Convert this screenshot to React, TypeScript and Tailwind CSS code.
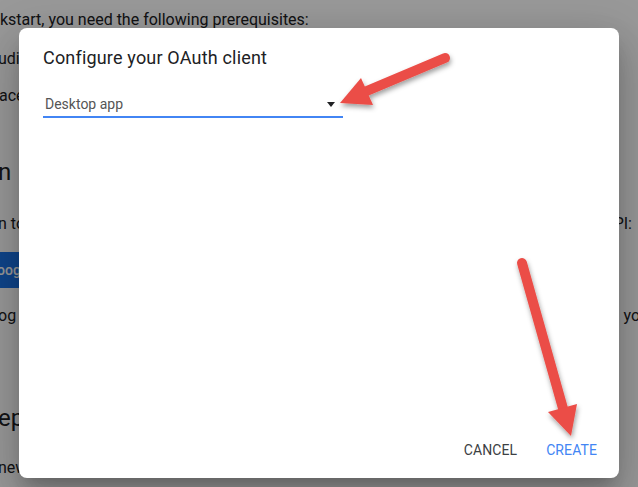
const font = { fontFamily: "Roboto, 'Liberation Sans', sans-serif" };

function Backdrop() {
  return (
    <div className="h-full w-full overflow-hidden bg-white text-[#202124]">
      <p className="mt-[8px] h-[24px] text-[16px] leading-[24px] whitespace-nowrap">kstart, you need the following prerequisites:</p>
      <p className="mt-[15px] h-[24px] -ml-[2px] text-[16px] leading-[24px]">udic</p>
      <p className="mt-[13px] h-[24px] -ml-[1px] text-[16px] leading-[24px]">ace</p>
      <p className="mt-[48px] h-[32px] -ml-[2px] text-[24px] leading-[32px]">n</p>
      <div className="mt-[24px] flex h-[24px] justify-between text-[16px] leading-[24px]">
        <span className="-ml-[2px]">n to</span>
        <span className="pr-[6px]">PI:</span>
      </div>
      <div className="mt-[16px] flex h-[36px] w-[50px] items-center bg-[#1a73e8] text-[14px] font-medium text-white">
        <span className="-ml-[3px]">oog</span>
      </div>
      <div className="mt-[16px] flex h-[24px] justify-between text-[16px] leading-[24px]">
        <span className="-ml-[2px]">og</span>
        <span className="-mr-[2px]">yo</span>
      </div>
      <p className="mt-[74px] h-[32px] -ml-[2px] text-[24px] leading-[32px]">ep</p>
      <p className="mt-[22px] h-[24px] -ml-[2px] text-[16px] leading-[24px]">new</p>
    </div>
  );
}

function Arrows() {
  return (
    <svg className="pointer-events-none absolute inset-0" width="638" height="487" viewBox="0 0 638 487" fill="none">
      <defs>
        <filter id="arrowShadow" x="-30%" y="-30%" width="160%" height="160%">
          <feDropShadow dx="1" dy="3" stdDeviation="2.5" floodColor="#000" floodOpacity="0.38" />
        </filter>
      </defs>
      <g filter="url(#arrowShadow)">
        <line x1="445" y1="58" x2="362" y2="93" stroke="#eb4d47" strokeWidth="10" strokeLinecap="round" />
        <polygon points="340,103 361,78 373,105" fill="#eb4d47" />
      </g>
      <g filter="url(#arrowShadow)">
        <line x1="522" y1="263" x2="564" y2="412" stroke="#eb4d47" strokeWidth="10" strokeLinecap="round" />
        <polygon points="571,436 548,412 577,404" fill="#eb4d47" />
      </g>
    </svg>
  );
}

export default function App() {
  return (
    <div className="relative h-[487px] w-[638px] overflow-hidden" style={font}>
      <Backdrop />
      <div className="absolute inset-0 bg-black/40" />
      <div className="absolute left-[19px] top-[28px] flex h-[450px] w-[600px] flex-col rounded-[8px] bg-white px-[24px] pb-[18px] pt-[18px] shadow-[0_11px_15px_-7px_rgba(0,0,0,0.2),0_24px_38px_3px_rgba(0,0,0,0.14),0_9px_46px_8px_rgba(0,0,0,0.12)]">
        <h2 className="text-[18px] font-normal leading-[24px] tracking-[0.18px] text-[#202124]">Configure your OAuth client</h2>
        <div className="mt-[20px] flex h-[28px] w-[300px] items-center justify-between border-b-2 border-[#4285f4] pl-[2px] pr-[8px] pt-[2px]">
          <span className="text-[14px] leading-[20px] text-[#555]">Desktop app</span>
          <span className="h-0 w-0 border-x-[4px] border-t-[5px] border-x-transparent border-t-[#202124]" />
        </div>
        <div className="mt-auto -mr-[2px] flex justify-end gap-[29px] text-[14px] leading-[20px] tracking-[0.1px]">
          <span className="text-[#3c4043]">CANCEL</span>
          <span className="text-[#4285f4]">CREATE</span>
        </div>
      </div>
      <Arrows />
    </div>
  );
}
